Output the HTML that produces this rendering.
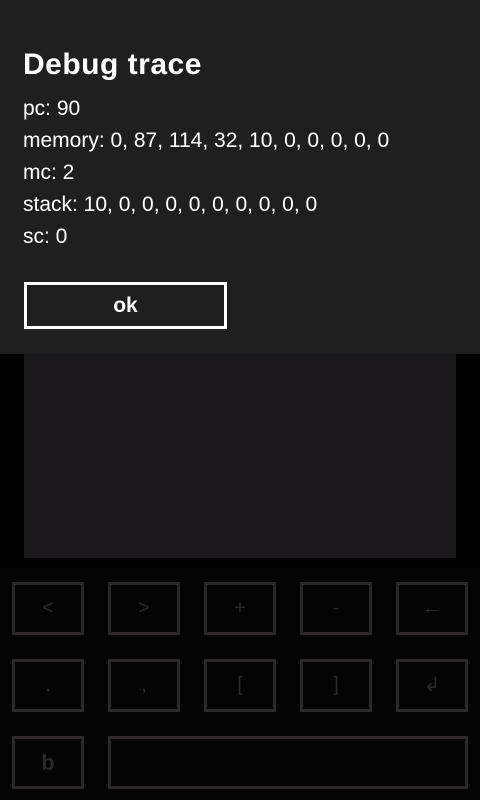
<!DOCTYPE html>
<html><head><style>
body{margin:0;width:480px;height:800px;background:#000;position:relative;overflow:hidden;font-family:"Liberation Sans",sans-serif;}
.dlg{position:absolute;left:0;top:0;width:480px;height:354px;background:#1f1f1f;color:#fff;}
.t{position:absolute;left:23px;top:48px;font-size:30px;font-weight:bold;letter-spacing:0.5px;}
.l{position:absolute;left:23px;font-size:21px;}
.ok{position:absolute;left:24px;top:282px;width:197px;height:41px;border:3px solid #fff;text-align:center;line-height:41px;font-size:21px;font-weight:bold;}
.tb{position:absolute;left:24px;top:354px;width:432px;height:204px;background:#1b171b;}
.kb{position:absolute;left:0;top:568px;width:480px;height:232px;background:#030403;}
.k{position:absolute;width:66px;height:47px;border:3px solid #2b272b;color:#2b272b;text-align:center;line-height:47px;font-size:20px;}
</style></head><body>
<div class="tb"></div>
<div class="kb"></div>
<div class="k" style="left:12px;top:582px">&lt;</div>
<div class="k" style="left:108px;top:582px">&gt;</div>
<div class="k" style="left:204px;top:582px">+</div>
<div class="k" style="left:300px;top:582px">-</div>
<div class="k" style="left:396px;top:582px">←</div>
<div class="k" style="left:12px;top:659px">.</div>
<div class="k" style="left:108px;top:659px">,</div>
<div class="k" style="left:204px;top:659px">[</div>
<div class="k" style="left:300px;top:659px">]</div>
<div class="k" style="left:396px;top:659px">↲</div>
<div class="k" style="left:12px;top:736px;font-weight:bold;font-size:22px">b</div>
<div class="k" style="left:108px;top:736px;width:354px"></div>
<div class="dlg">
<div class="t">Debug trace</div>
<div class="l" style="top:97px">pc: 90</div>
<div class="l" style="top:129px">memory: 0, 87, 114, 32, 10, 0, 0, 0, 0, 0</div>
<div class="l" style="top:161px">mc: 2</div>
<div class="l" style="top:193px">stack: 10, 0, 0, 0, 0, 0, 0, 0, 0, 0</div>
<div class="l" style="top:225px">sc: 0</div>
<div class="ok">ok</div>
</div>
</body></html>
